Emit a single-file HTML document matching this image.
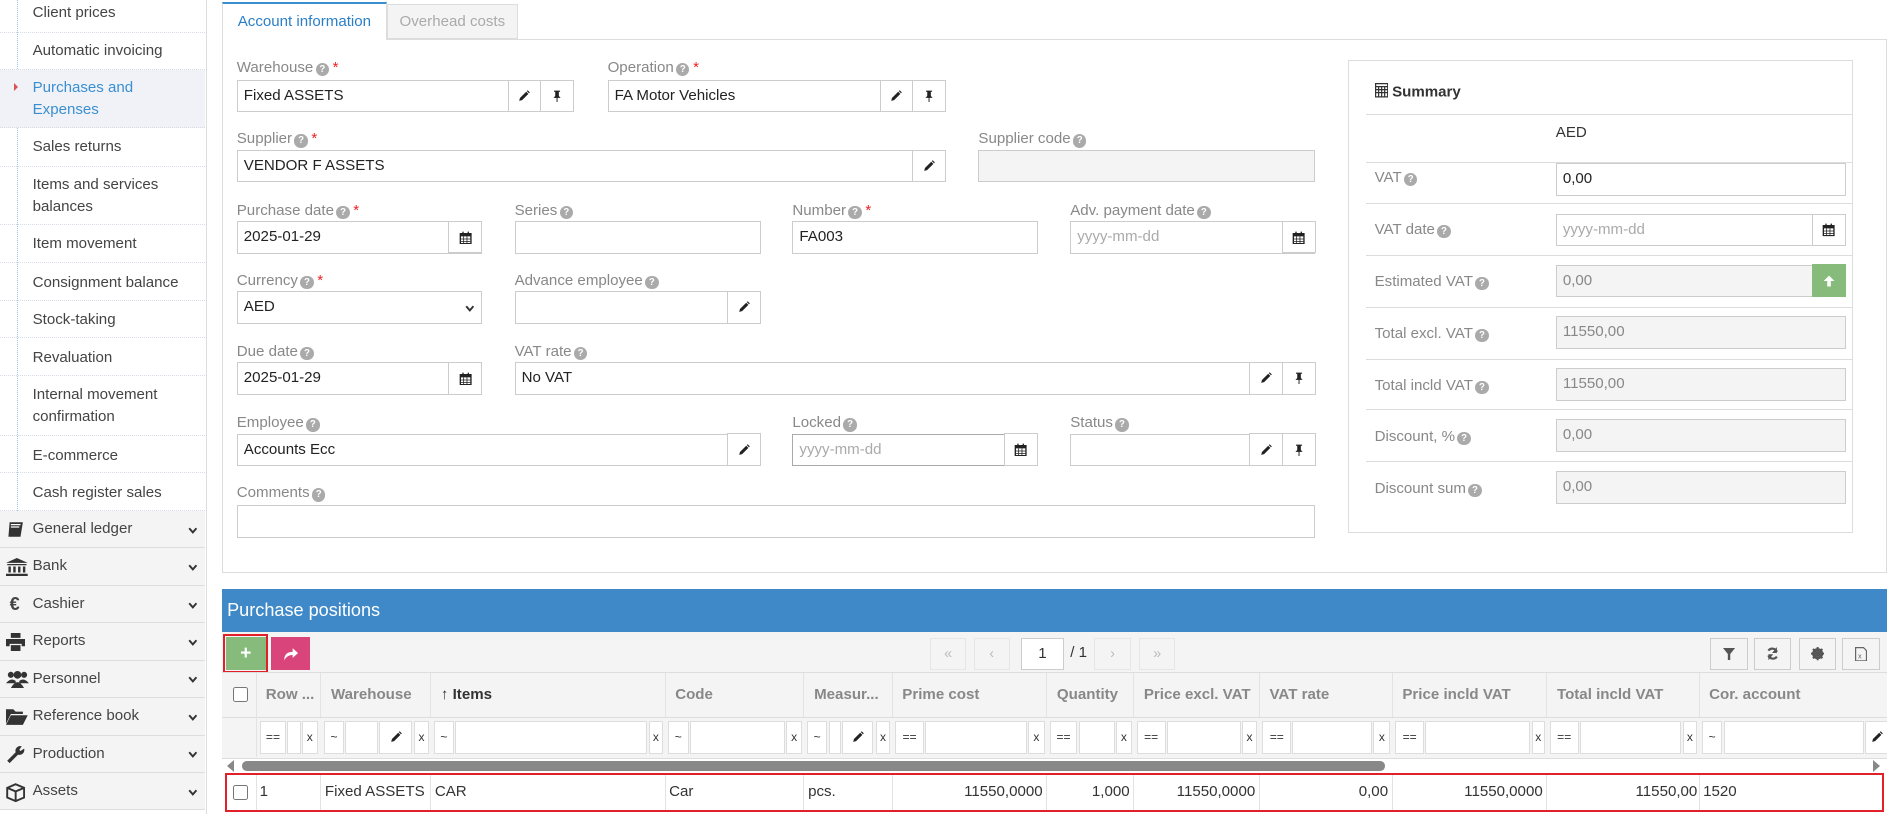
<!DOCTYPE html>
<html><head><meta charset="utf-8">
<style>
*{box-sizing:border-box;margin:0;padding:0}
html,body{width:1894px;height:814px;overflow:hidden;background:#fff}
#root{zoom:1.20791;width:1568px;height:674px;position:relative;font-family:"Liberation Sans",sans-serif;font-size:12.5px;color:#333}
.a{position:absolute}
.side{left:0;top:0;width:171px;height:674px;border-right:1px solid #ddd;background:#fff}
.si{position:absolute;left:0;width:170px;border-bottom:1px dotted #d6dce6;color:#444;padding-left:27px;font-size:12.5px;line-height:18px}
.vl{left:14px;top:0;height:423px;border-left:1px dotted #9cc4e8}
.mi{position:absolute;left:0;width:170px;height:31px;background:#f4f4f4;border-bottom:1px solid #ddd;color:#444;padding-left:27px;line-height:30px;font-size:12.5px}
.mi .ic{position:absolute;left:5px;top:8px}
.mi .ch{position:absolute;left:156px;top:13px}
.lbl{position:absolute;color:#888;font-size:12.5px;white-space:nowrap}
.q{display:inline-block;width:11px;height:11px;border-radius:50%;background:#aaa;color:#fff;font-size:8px;line-height:11px;text-align:center;font-weight:bold;vertical-align:0;margin-left:2px}
.r{color:#e22;margin-left:3px}
.in{position:absolute;border:1px solid #ccc;background:#fff;height:27px;line-height:25px;padding-left:5px;color:#222;font-size:12.5px;white-space:nowrap}
.dis{background:#f4f4f4;color:#888}
.ph{color:#aaa}
.bt{position:absolute;top:-1px;height:27px;width:28px;border:1px solid #ccc;background:#fff;display:flex;align-items:center;justify-content:center}
.sr{position:absolute;left:1131px;width:403px;border-top:1px solid #ddd}
.th{position:absolute;top:557px;height:37px;line-height:37px;font-weight:bold;color:#888;font-size:12.5px;padding-left:8px;border-right:1px solid #e3e3e3;white-space:nowrap;overflow:hidden}
.fb{position:absolute;top:597px;height:27px;border:1px solid #ddd;background:#fff;font-size:10px;text-align:center;line-height:25px;color:#333}
.td{position:absolute;top:641px;height:30px;line-height:30px;font-size:12.5px;color:#333;border-right:1px solid #e3e3e3;white-space:nowrap;padding:0 3px}
.rt{text-align:right}
.pg{position:absolute;top:528px;height:27px;width:30px;border:1px solid #e6e6e6;background:#f4f4f4;color:#bbb;text-align:center;line-height:25px;font-size:12px}
.tb{position:absolute;top:528px;height:27px;width:31px;border:1px solid #ccc;background:#f4f4f4;display:flex;align-items:center;justify-content:center}
</style></head><body><div id="root">

<svg width="0" height="0" style="position:absolute"><defs>
<symbol id="pen" viewBox="0 0 10 10"><path d="M1 9 L1.6 6.6 L6.8 1.4 L8.6 3.2 L3.4 8.4 Z M7.3 0.9 L8 0.2 L9.8 2 L9.1 2.7 Z" fill="#222"/></symbol>
<symbol id="pin" viewBox="0 0 10 10"><path d="M2.5 0.5 H7.5 V1.5 H6.5 V5 L8 6.5 H2 L3.5 5 V1.5 H2.5 Z M4.6 6.5 H5.4 V10 H4.6 Z" fill="#222"/></symbol>
<symbol id="cal" viewBox="0 0 10 10"><path d="M1 2 H9 V9.5 H1 Z" fill="none" stroke="#222" stroke-width="1"/><path d="M1 2 H9 V4 H1 Z M2.5 0.5 H3.5 V2.5 H2.5 Z M6.5 0.5 H7.5 V2.5 H6.5 Z" fill="#222"/><path d="M1 6 H9 M1 7.8 H9 M3.5 4 V9.5 M6 4 V9.5" stroke="#222" stroke-width="0.6"/></symbol>
<symbol id="chev" viewBox="0 0 8 6"><path d="M1 1 L4 4.5 L7 1" fill="none" stroke="#333" stroke-width="1.6"/></symbol>
</defs></svg>

<!-- SIDEBAR -->
<div class="a side"></div>
<div class="a vl"></div>
<div class="si" style="top:0;height:27px;padding-top:2px">Client prices</div>
<div class="si" style="top:27px;height:31px;padding-top:6px">Automatic invoicing</div>
<div class="si" style="top:58px;height:48px;padding-top:6px;background:#f0f2f7;color:#3a8fd1">Purchases and<br>Expenses</div>
<div class="a" style="left:12px;top:69px;width:0;height:0;border-left:4px solid #d9534f;border-top:4px solid transparent;border-bottom:4px solid transparent"></div>
<div class="si" style="top:106px;height:32px;padding-top:7px">Sales returns</div>
<div class="si" style="top:138px;height:48px;padding-top:6px">Items and services<br>balances</div>
<div class="si" style="top:186px;height:32px;padding-top:7px">Item movement</div>
<div class="si" style="top:218px;height:31px;padding-top:7px">Consignment balance</div>
<div class="si" style="top:249px;height:31px;padding-top:7px">Stock-taking</div>
<div class="si" style="top:280px;height:31px;padding-top:7px">Revaluation</div>
<div class="si" style="top:311px;height:50px;padding-top:7px">Internal movement<br>confirmation</div>
<div class="si" style="top:361px;height:31px;padding-top:7px">E-commerce</div>
<div class="si" style="top:392px;height:31px;padding-top:7px">Cash register sales</div>

<div class="mi" style="top:423px"><svg class="ic" width="16" height="15" viewBox="0 0 16 15"><path d="M3 1 H14 L12 13 H2 Z" fill="#333"/><path d="M4 3 H12 M4 5 H11" stroke="#fff"/></svg>General ledger<svg class="ch" width="8" height="6"><use href="#chev"/></svg></div>
<div class="mi" style="top:454px"><svg class="ic" width="18" height="15" viewBox="0 0 18 15"><path d="M9 0 L18 4 H0 Z M1 5 H17 V6 H1 Z M0 13 H18 V15 H0 Z M2 7 H4 V12 H2 Z M6 7 H8 V12 H6 Z M10 7 H12 V12 H10 Z M14 7 H16 V12 H14 Z" fill="#333"/></svg>Bank<svg class="ch" width="8" height="6"><use href="#chev"/></svg></div>
<div class="mi" style="top:485px"><span class="ic" style="font-weight:bold;top:0;left:8px;font-size:15px">€</span>Cashier<svg class="ch" width="8" height="6"><use href="#chev"/></svg></div>
<div class="mi" style="top:516px"><svg class="ic" width="16" height="15" viewBox="0 0 16 15"><path d="M4 0 H12 V4 H4 Z M0 5 H16 V11 H13 V9 H3 V11 H0 Z M4 10 H12 V15 H4 Z" fill="#333"/></svg>Reports<svg class="ch" width="8" height="6"><use href="#chev"/></svg></div>
<div class="mi" style="top:547px"><svg class="ic" width="19" height="15" viewBox="0 0 19 15"><circle cx="4" cy="4" r="2.5" fill="#333"/><circle cx="15" cy="4" r="2.5" fill="#333"/><circle cx="9.5" cy="4" r="3.2" fill="#333"/><path d="M0 11 Q4 6 8 9 V11 Z M11 9 Q15 6 19 11 H11 Z M4 15 Q9.5 5 15 15 Z" fill="#333"/></svg>Personnel<svg class="ch" width="8" height="6"><use href="#chev"/></svg></div>
<div class="mi" style="top:578px"><svg class="ic" width="18" height="14" viewBox="0 0 18 14"><path d="M0 1 H6 L8 3 H14 V5 H4 L0 13 Z M4 6 H18 L14 14 H0 Z" fill="#333"/></svg>Reference book<svg class="ch" width="8" height="6"><use href="#chev"/></svg></div>
<div class="mi" style="top:609px"><svg class="ic" width="16" height="16" viewBox="0 0 16 16"><path d="M1 13 L8 6 A4 4 0 0 1 13 1 L11 4 L12 5 L15 3 A4 4 0 0 1 10 8 L3 15 Z" fill="#333"/></svg>Production<svg class="ch" width="8" height="6"><use href="#chev"/></svg></div>
<div class="mi" style="top:640px"><svg class="ic" width="16" height="16" viewBox="0 0 16 16"><path d="M8 1 L15 4 V12 L8 15 L1 12 V4 Z M1 4 L8 7 L15 4 M8 7 V15" fill="none" stroke="#333" stroke-width="1.6"/></svg>Assets<svg class="ch" width="8" height="6"><use href="#chev"/></svg></div>

<!-- TABS -->
<div class="a" style="left:184px;top:2px;width:136px;height:31px;border:1px solid #ddd;border-top:2px solid #3a8fd1;border-bottom:none;background:#fff;color:#2a7fc8;text-align:center;line-height:29px;font-size:12.5px">Account information</div>
<div class="a" style="left:320px;top:3px;width:109px;height:29px;border:1px solid #ddd;background:#f4f4f4;color:#aaa;text-align:center;line-height:28px;font-size:12.5px">Overhead costs</div>
<div class="a" style="left:184px;top:32px;width:1378px;height:442px;border:1px solid #ddd;border-top:none"></div>
<div class="a" style="left:320px;top:32px;width:1242px;border-top:1px solid #ddd"></div>

<!-- FORM -->
<div class="lbl" style="left:196px;top:49px">Warehouse<span class="q">?</span><span class="r">*</span></div>
<div class="in" style="left:196px;top:66px;width:279px">Fixed ASSETS<div class="bt" style="right:26px"><svg width="10" height="10"><use href="#pen"/></svg></div><div class="bt" style="right:-1px"><svg width="10" height="10"><use href="#pin"/></svg></div></div>
<div class="lbl" style="left:503px;top:49px">Operation<span class="q">?</span><span class="r">*</span></div>
<div class="in" style="left:503px;top:66px;width:280px">FA Motor Vehicles<div class="bt" style="right:26px"><svg width="10" height="10"><use href="#pen"/></svg></div><div class="bt" style="right:-1px"><svg width="10" height="10"><use href="#pin"/></svg></div></div>

<div class="lbl" style="left:196px;top:108px">Supplier<span class="q">?</span><span class="r">*</span></div>
<div class="in" style="left:196px;top:124px;width:587px">VENDOR F ASSETS<div class="bt" style="right:-1px"><svg width="10" height="10"><use href="#pen"/></svg></div></div>
<div class="lbl" style="left:810px;top:108px">Supplier code<span class="q">?</span></div>
<div class="in dis" style="left:810px;top:124px;width:279px"></div>

<div class="lbl" style="left:196px;top:167px">Purchase date<span class="q">?</span><span class="r">*</span></div>
<div class="in" style="left:196px;top:183px;width:203px">2025-01-29<div class="bt" style="right:-1px"><svg width="11" height="11"><use href="#cal"/></svg></div></div>
<div class="lbl" style="left:426px;top:167px">Series<span class="q">?</span></div>
<div class="in" style="left:426px;top:183px;width:204px"></div>
<div class="lbl" style="left:656px;top:167px">Number<span class="q">?</span><span class="r">*</span></div>
<div class="in" style="left:656px;top:183px;width:203px">FA003</div>
<div class="lbl" style="left:886px;top:167px">Adv. payment date<span class="q">?</span></div>
<div class="in ph" style="left:886px;top:183px;width:203px">yyyy-mm-dd<div class="bt" style="right:-1px"><svg width="11" height="11"><use href="#cal"/></svg></div></div>

<div class="lbl" style="left:196px;top:225px">Currency<span class="q">?</span><span class="r">*</span></div>
<div class="in" style="left:196px;top:241px;width:203px">AED<svg class="a" style="left:188px;top:11px" width="8" height="6"><use href="#chev"/></svg></div>
<div class="lbl" style="left:426px;top:225px">Advance employee<span class="q">?</span></div>
<div class="in" style="left:426px;top:241px;width:204px"><div class="bt" style="right:-1px"><svg width="10" height="10"><use href="#pen"/></svg></div></div>

<div class="lbl" style="left:196px;top:284px">Due date<span class="q">?</span></div>
<div class="in" style="left:196px;top:300px;width:203px">2025-01-29<div class="bt" style="right:-1px"><svg width="11" height="11"><use href="#cal"/></svg></div></div>
<div class="lbl" style="left:426px;top:284px">VAT rate<span class="q">?</span></div>
<div class="in" style="left:426px;top:300px;width:663px">No VAT<div class="bt" style="right:26px"><svg width="10" height="10"><use href="#pen"/></svg></div><div class="bt" style="right:-1px"><svg width="10" height="10"><use href="#pin"/></svg></div></div>

<div class="lbl" style="left:196px;top:343px">Employee<span class="q">?</span></div>
<div class="in" style="left:196px;top:359px;width:434px">Accounts Ecc<div class="bt" style="right:-1px"><svg width="10" height="10"><use href="#pen"/></svg></div></div>
<div class="lbl" style="left:656px;top:343px">Locked<span class="q">?</span></div>
<div class="in ph" style="left:656px;top:359px;width:203px;border-color:#aaa">yyyy-mm-dd<div class="bt" style="right:-1px;border-color:#ccc"><svg width="11" height="11"><use href="#cal"/></svg></div></div>
<div class="lbl" style="left:886px;top:343px">Status<span class="q">?</span></div>
<div class="in" style="left:886px;top:359px;width:203px"><div class="bt" style="right:26px"><svg width="10" height="10"><use href="#pen"/></svg></div><div class="bt" style="right:-1px"><svg width="10" height="10"><use href="#pin"/></svg></div></div>

<div class="lbl" style="left:196px;top:401px">Comments<span class="q">?</span></div>
<div class="in" style="left:196px;top:418px;width:893px"></div>

<!-- SUMMARY -->
<div class="a" style="left:1116px;top:50px;width:418px;height:391px;border:1px solid #ddd"></div>
<div class="a" style="left:1138px;top:69px;font-weight:bold;font-size:12.5px;color:#333"><svg width="11" height="12" viewBox="0 0 11 12" style="vertical-align:-1px"><path d="M0.5 0.5 H10.5 V11.5 H0.5 Z M0.5 3 H10.5 M0.5 5.5 H10.5 M0.5 8 H10.5 M3 3 V11.5 M5.5 3 V11.5 M8 3 V11.5" fill="none" stroke="#333"/></svg> Summary</div>
<div class="sr" style="top:94px"></div>
<div class="a" style="left:1288px;top:103px;font-size:12.5px">AED</div>
<div class="sr" style="top:134px"></div>
<div class="lbl" style="left:1138px;top:140px">VAT<span class="q">?</span></div>
<div class="in" style="left:1288px;top:135px;width:240px">0,00</div>
<div class="sr" style="top:168px"></div>
<div class="lbl" style="left:1138px;top:183px">VAT date<span class="q">?</span></div>
<div class="in ph" style="left:1288px;top:177px;width:240px">yyyy-mm-dd<div class="bt" style="right:-1px"><svg width="11" height="11"><use href="#cal"/></svg></div></div>
<div class="sr" style="top:211px"></div>
<div class="lbl" style="left:1138px;top:226px">Estimated VAT<span class="q">?</span></div>
<div class="in dis" style="left:1288px;top:219px;width:240px">0,00<div class="bt" style="right:-1px;background:#86bb7c;border-color:#86bb7c"><svg width="10" height="10" viewBox="0 0 10 10"><path d="M5 0.5 L9.5 5 H6.5 V9.5 H3.5 V5 H0.5 Z" fill="#fff"/></svg></div></div>
<div class="sr" style="top:254px"></div>
<div class="lbl" style="left:1138px;top:269px">Total excl. VAT<span class="q">?</span></div>
<div class="in dis" style="left:1288px;top:262px;width:240px">11550,00</div>
<div class="sr" style="top:297px"></div>
<div class="lbl" style="left:1138px;top:312px">Total incld VAT<span class="q">?</span></div>
<div class="in dis" style="left:1288px;top:305px;width:240px">11550,00</div>
<div class="sr" style="top:339px"></div>
<div class="lbl" style="left:1138px;top:354px">Discount, %<span class="q">?</span></div>
<div class="in dis" style="left:1288px;top:347px;width:240px">0,00</div>
<div class="sr" style="top:382px"></div>
<div class="lbl" style="left:1138px;top:397px">Discount sum<span class="q">?</span></div>
<div class="in dis" style="left:1288px;top:390px;width:240px">0,00</div>

<!-- PURCHASE POSITIONS -->
<div class="a" style="left:184px;top:488px;width:1378px;height:35px;background:#3f89c9;color:#fff;font-size:15px;line-height:35px;padding-left:4px">Purchase positions</div>
<div class="a" style="left:184px;top:523px;width:1378px;height:151px;background:#f4f4f4"></div>
<div class="a" style="left:185px;top:525px;width:37px;height:32px;border:2px solid #e2202a"></div>
<div class="a" style="left:187px;top:527px;width:33px;height:28px;background:#86bb7c;color:#fff;text-align:center;line-height:28px;font-weight:bold;font-size:16px">+</div>
<div class="a" style="left:224px;top:527px;width:33px;height:28px;background:#d9457a;display:flex;align-items:center;justify-content:center"><svg width="13" height="11" viewBox="0 0 13 11"><path d="M1 11 Q1 4 8 4 V1 L12.5 5 L8 9 V6.5 Q3.5 6.5 1 11 Z" fill="#fff"/></svg></div>

<div class="pg" style="left:770px">«</div>
<div class="pg" style="left:806px">‹</div>
<div class="a" style="left:845px;top:528px;width:36px;height:27px;border:1px solid #ccc;background:#fff;text-align:center;line-height:25px">1</div>
<div class="a" style="left:886px;top:533px">/ 1</div>
<div class="pg" style="left:906px">›</div>
<div class="pg" style="left:943px">»</div>
<div class="tb" style="left:1416px"><svg width="10" height="10" viewBox="0 0 10 10"><path d="M0 0 H10 L6 5 V10 H4 V5 Z" fill="#555"/></svg></div>
<div class="tb" style="left:1452px"><svg width="11" height="11" viewBox="0 0 11 11"><path d="M9 4 A4 4 0 0 0 2 3 M2 7 A4 4 0 0 0 9 8" fill="none" stroke="#555" stroke-width="1.8"/><path d="M9 0 V5 H5 Z M2 11 V6 H6 Z" fill="#555"/></svg></div>
<div class="tb" style="left:1489px"><svg width="11" height="11" viewBox="0 0 11 11"><circle cx="5.5" cy="5.5" r="3.5" fill="none" stroke="#555" stroke-width="2.2"/><path d="M5.5 0 V11 M0 5.5 H11 M1.6 1.6 L9.4 9.4 M9.4 1.6 L1.6 9.4" stroke="#555" stroke-width="1.6"/></svg></div>
<div class="tb" style="left:1525px"><svg width="10" height="12" viewBox="0 0 10 12"><path d="M0.5 0.5 H7 L9.5 3 V11.5 H0.5 Z" fill="none" stroke="#666"/><text x="2.5" y="9.5" font-size="6" fill="#666" font-family="Liberation Sans">x</text></svg></div>

<!-- table -->
<div class="a" style="left:184px;top:556px;width:1378px;height:72px;background:#f4f4f4;border-top:1px solid #ddd;border-bottom:1px solid #ddd"></div>
<div class="a" style="left:184px;top:594px;width:1378px;border-top:1px solid #ddd"></div>
<div class="a" style="left:193px;top:569px;width:12px;height:12px;border:1px solid #777;border-radius:2px;background:#fff"></div>
<div class="th" style="left:212px;width:54px">Row ...</div>
<div class="th" style="left:266px;width:91px">Warehouse</div>
<div class="th" style="left:357px;width:194px;color:#333">&#8593; Items</div>
<div class="th" style="left:551px;width:115px">Code</div>
<div class="th" style="left:666px;width:73px">Measur...</div>
<div class="th" style="left:739px;width:128px">Prime cost</div>
<div class="th" style="left:867px;width:72px">Quantity</div>
<div class="th" style="left:939px;width:104px">Price excl. VAT</div>
<div class="th" style="left:1043px;width:110px">VAT rate</div>
<div class="th" style="left:1153px;width:128px">Price incld VAT</div>
<div class="th" style="left:1281px;width:126px">Total incld VAT</div>
<div class="th" style="left:1407px;width:155px;border-right:none">Cor. account</div>
<div class="a" style="left:212px;top:557px;height:70px;border-left:1px solid #e3e3e3"></div>

<!-- filter boxes -->
<div class="fb" style="left:215px;width:22px">==</div><div class="fb" style="left:238px;width:11px"></div><div class="fb" style="left:250px;width:13px">x</div>
<div class="fb" style="left:268px;width:17px">~</div><div class="fb" style="left:286px;width:27px"></div><div class="fb" style="left:314px;width:27px"><svg width="10" height="10" style="margin-top:7px"><use href="#pen"/></svg></div><div class="fb" style="left:343px;width:12px">x</div>
<div class="fb" style="left:359px;width:17px">~</div><div class="fb" style="left:377px;width:159px"></div><div class="fb" style="left:537px;width:12px">x</div>
<div class="fb" style="left:553px;width:17px">~</div><div class="fb" style="left:571px;width:79px"></div><div class="fb" style="left:651px;width:13px">x</div>
<div class="fb" style="left:668px;width:17px">~</div><div class="fb" style="left:686px;width:10px"></div><div class="fb" style="left:697px;width:26px"><svg width="10" height="10" style="margin-top:7px"><use href="#pen"/></svg></div><div class="fb" style="left:725px;width:12px">x</div>
<div class="fb" style="left:741px;width:24px">==</div><div class="fb" style="left:766px;width:84px"></div><div class="fb" style="left:851px;width:14px">x</div>
<div class="fb" style="left:869px;width:23px">==</div><div class="fb" style="left:893px;width:30px"></div><div class="fb" style="left:924px;width:13px">x</div>
<div class="fb" style="left:941px;width:24px">==</div><div class="fb" style="left:966px;width:61px"></div><div class="fb" style="left:1028px;width:13px">x</div>
<div class="fb" style="left:1045px;width:24px">==</div><div class="fb" style="left:1070px;width:66px"></div><div class="fb" style="left:1137px;width:14px">x</div>
<div class="fb" style="left:1155px;width:24px">==</div><div class="fb" style="left:1180px;width:87px"></div><div class="fb" style="left:1268px;width:11px">x</div>
<div class="fb" style="left:1283px;width:24px">==</div><div class="fb" style="left:1308px;width:84px"></div><div class="fb" style="left:1393px;width:12px">x</div>
<div class="fb" style="left:1409px;width:17px">~</div><div class="fb" style="left:1427px;width:116px"></div><div class="fb" style="left:1544px;width:18px;border-right:none;text-align:left;padding-left:4px"><svg width="10" height="10" style="margin-top:7px"><use href="#pen"/></svg></div>

<!-- scrollbar -->
<div class="a" style="left:184px;top:628px;width:1378px;height:12px;background:#fff"></div>
<div class="a" style="left:188px;top:629px;width:0;height:0;border-right:6px solid #888;border-top:5px solid transparent;border-bottom:5px solid transparent"></div>
<div class="a" style="left:200px;top:630px;width:947px;height:8px;background:#888;border-radius:4px"></div>
<div class="a" style="left:1551px;top:629px;width:0;height:0;border-left:6px solid #888;border-top:5px solid transparent;border-bottom:5px solid transparent"></div>

<!-- data row -->
<div class="a" style="left:184px;top:640px;width:1378px;height:34px;background:#fff"></div>
<div class="a" style="left:193px;top:650px;width:12px;height:12px;border:1px solid #777;border-radius:2px;background:#fff"></div>
<div class="a" style="left:212px;top:641px;height:30px;border-left:1px solid #e3e3e3"></div>
<div class="td" style="left:212px;width:54px">1</div>
<div class="td" style="left:266px;width:91px">Fixed ASSETS</div>
<div class="td" style="left:357px;width:194px">CAR</div>
<div class="td" style="left:551px;width:115px">Car</div>
<div class="td" style="left:666px;width:73px">pcs.</div>
<div class="td rt" style="left:739px;width:128px">11550,0000</div>
<div class="td rt" style="left:867px;width:72px">1,000</div>
<div class="td rt" style="left:939px;width:104px">11550,0000</div>
<div class="td rt" style="left:1043px;width:110px">0,00</div>
<div class="td rt" style="left:1153px;width:128px">11550,0000</div>
<div class="td rt" style="left:1281px;width:126px;padding-right:1px">11550,00</div>
<div class="td" style="left:1407px;width:150px;border-right:none">1520</div>
<div class="a" style="left:186px;top:640px;width:1374px;height:32px;border:2px solid #e2202a"></div>

</div></body></html>
